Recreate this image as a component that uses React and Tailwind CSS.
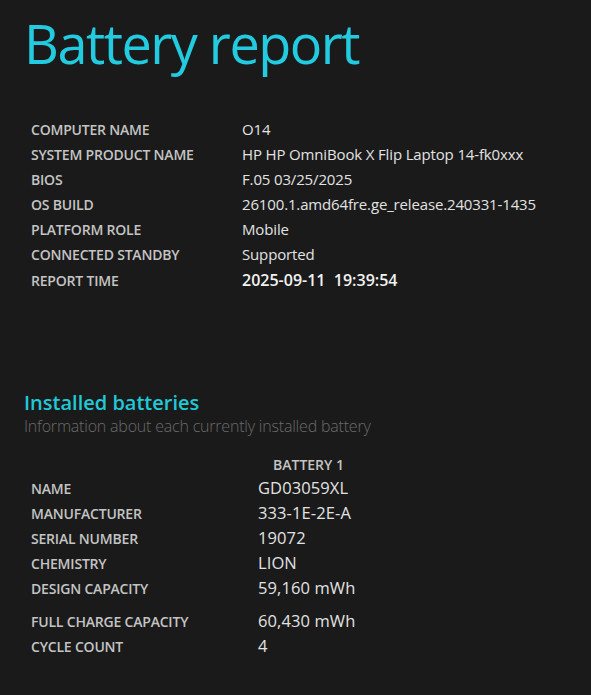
import React from 'react'

const sysInfo = [
  ['COMPUTER NAME', 'O14'],
  ['SYSTEM PRODUCT NAME', 'HP HP OmniBook X Flip Laptop 14-fk0xxx'],
  ['BIOS', 'F.05 03/25/2025'],
  ['OS BUILD', '26100.1.amd64fre.ge_release.240331-1435'],
  ['PLATFORM ROLE', 'Mobile'],
  ['CONNECTED STANDBY', 'Supported'],
]

const battery = [
  ['NAME', 'GD03059XL'],
  ['MANUFACTURER', '333-1E-2E-A'],
  ['SERIAL NUMBER', '19072'],
  ['CHEMISTRY', 'LION'],
  ['DESIGN CAPACITY', '59,160 mWh'],
]

function Row({ label, value, labelW, valueCls }) {
  return (
    <div className="flex items-baseline h-[25px]">
      <div className={`${labelW} text-[14px] font-semibold text-[#c4c4c4] tracking-[-0.2px]`}>{label}</div>
      <div className={valueCls}>{value}</div>
    </div>
  )
}

export default function App() {
  return (
    <div className="w-[591px] h-[695px] bg-[#1a1a1a] overflow-hidden" style={{ fontFamily: '"Open Sans", "Noto Sans", sans-serif' }}>
      <h1 className="pl-[24px] pt-[8px] text-[54px] leading-[70px] text-[#22cbe0] tracking-[-1.5px]">Battery report</h1>

      <div className="pl-[31px] mt-[40px]">
        {sysInfo.map(([l, v]) => (
          <Row key={l} label={l} value={v} labelW="w-[211px]" valueCls="text-[15px] tracking-[-0.15px] text-[#e2e2e2]" />
        ))}
        <Row
          label="REPORT TIME"
          value={'2025-09-11\u00a0\u00a019:39:54'}
          labelW="w-[211px]"
          valueCls="text-[16px] font-semibold text-[#f2f2f2]"
        />
      </div>

      <div className="pl-[24px] mt-[97px]">
        <h2 className="text-[20px] leading-[26px] font-semibold text-[#20c8d8]">Installed batteries</h2>
        <p className="text-[16px] leading-[20px] font-light text-[#6a6a6a] tracking-[-0.2px]">Information about each currently installed battery</p>
      </div>

      <div className="pl-[31px] mt-[18px]">
        <div className="pl-[242px] h-[22px] text-[14px] font-semibold text-[#c4c4c4]">BATTERY 1</div>
        {battery.map(([l, v]) => (
          <Row key={l} label={l} value={v} labelW="w-[227px]" valueCls="text-[16.5px] tracking-[0.1px] text-[#e2e2e2]" />
        ))}
        <div className="h-[8px]" />
        <Row label="FULL CHARGE CAPACITY" value="60,430 mWh" labelW="w-[227px]" valueCls="text-[16.5px] tracking-[0.1px] text-[#e2e2e2]" />
        <Row label="CYCLE COUNT" value="4" labelW="w-[227px]" valueCls="text-[16.5px] tracking-[0.1px] text-[#e2e2e2]" />
      </div>
    </div>
  )
}
